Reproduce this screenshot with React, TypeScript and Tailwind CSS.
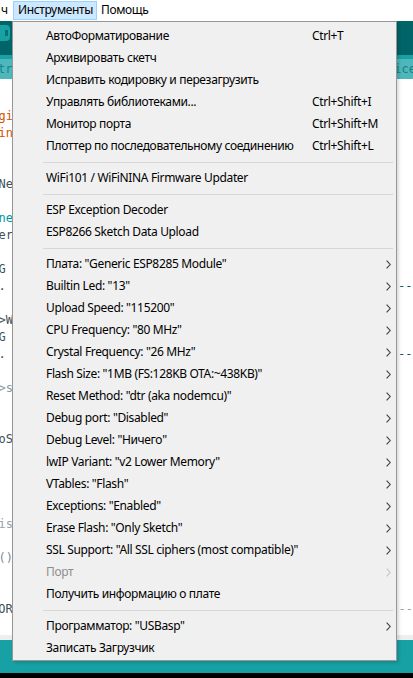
import { Fragment } from "react";

type MenuItem =
    | { label: string; shortcut?: string; sub?: boolean; disabled?: boolean }
    | "sep";

const menu: MenuItem[] = [
    { label: "АвтоФорматирование", shortcut: "Ctrl+T" },
    { label: "Архивировать скетч" },
    { label: "Исправить кодировку и перезагрузить" },
    { label: "Управлять библиотеками...", shortcut: "Ctrl+Shift+I" },
    { label: "Монитор порта", shortcut: "Ctrl+Shift+M" },
    { label: "Плоттер по последовательному соединению", shortcut: "Ctrl+Shift+L" },
    "sep",
    { label: "WiFi101 / WiFiNINA Firmware Updater" },
    "sep",
    { label: "ESP Exception Decoder" },
    { label: "ESP8266 Sketch Data Upload" },
    "sep",
    { label: 'Плата: "Generic ESP8285 Module"', sub: true },
    { label: 'Builtin Led: "13"', sub: true },
    { label: 'Upload Speed: "115200"', sub: true },
    { label: 'CPU Frequency: "80 MHz"', sub: true },
    { label: 'Crystal Frequency: "26 MHz"', sub: true },
    { label: 'Flash Size: "1MB (FS:128KB OTA:~438KB)"', sub: true },
    { label: 'Reset Method: "dtr (aka nodemcu)"', sub: true },
    { label: 'Debug port: "Disabled"', sub: true },
    { label: 'Debug Level: "Ничего"', sub: true },
    { label: 'lwIP Variant: "v2 Lower Memory"', sub: true },
    { label: 'VTables: "Flash"', sub: true },
    { label: 'Exceptions: "Enabled"', sub: true },
    { label: 'Erase Flash: "Only Sketch"', sub: true },
    { label: 'SSL Support: "All SSL ciphers (most compatible)"', sub: true },
    { label: "Порт", sub: true, disabled: true },
    { label: "Получить информацию о плате" },
    "sep",
    { label: 'Программатор: "USBasp"', sub: true },
    { label: "Записать Загрузчик" },
];

// editor lines peeking out on both sides of the menu
const code: Record<number, { l?: [string, string]; r?: [string, string] }> = {
    1: { l: ["gi", "text-[#d35400]"] },
    2: { l: ["in", "text-[#d35400]"] },
    5: { l: ["Ne", "text-[#434f54]"] },
    7: { l: ["ne", "text-[#00979c]"] },
    8: { l: ["er", "text-[#434f54]"] },
    10: { l: ["G ", "text-[#434f54]"] },
    11: { l: ["I. ", "text-[#434f54]"], r: ["--", "text-[#005c5f]"] },
    13: { l: [">W", "text-[#434f54]"] },
    14: { l: ["G ", "text-[#434f54]"] },
    15: { l: ["I. ", "text-[#434f54]"], r: ["--", "text-[#005c5f]"] },
    17: { l: [">s", "text-[#8a9aa0]"] },
    20: { l: ["oS", "text-[#434f54]"] },
    25: { l: ["is", "text-[#95a5a6]"] },
    27: { l: ["()", "text-[#7f8c9d]"] },
    30: { l: ["OR", "text-[#434f54]"], r: ["---", "text-[#95a5a6]"] },
};

function Chevron({ disabled }: { disabled?: boolean }) {
    return (
        <svg width="5" height="9" viewBox="0 0 5 9" fill="none">
            <path d="M0.6 0.6 L4.2 4.5 L0.6 8.4" stroke={disabled ? "#c4c4c4" : "#3c3c3c"} strokeWidth="1.1" />
        </svg>
    );
}

function ToolsMenu() {
    return (
        <div className="absolute left-[12px] top-[21px] w-[385px] border border-[#979797] bg-[#f0f0f0] pt-[3px] pb-[1px] tracking-[-0.35px] shadow-[2px_2px_3px_rgba(0,0,0,0.15)]">
            {menu.map((it, i) =>
                it === "sep" ? (
                    <div key={i} className="h-[10px] flex items-center">
                        <div className="ml-[30px] mr-[3px] flex-1 border-t border-[#d7d7d7]" />
                    </div>
                ) : (
                    <div key={i} className={`h-[22px] flex items-center pl-[33px] whitespace-nowrap ${it.disabled ? "text-[#8d8d8d]" : "text-black"}`}>
                        <span className="w-[266px]">{it.label}</span>
                        <span className="flex-1">{it.shortcut}</span>
                        <span className="w-[5px] mr-[5px] flex items-center">
                            {it.sub && <Chevron disabled={it.disabled} />}
                        </span>
                    </div>
                )
            )}
        </div>
    );
}

export default function App() {
    const lines = Array.from({ length: 32 }, (_, i) => i);
    return (
        <div className="relative w-[413px] h-[678px] overflow-hidden bg-white font-['Noto_Sans',sans-serif] text-[12px]">
            <div className="flex flex-col h-full">
                {/* menu bar */}
                <div className="h-[21px] flex items-center bg-white text-black tracking-[-0.35px]">
                    <span className="w-[13px] pl-[1px]">ч</span>
                    <span className="w-[84px] h-[19px] flex items-center pl-[4px] bg-[#cce8ff] border border-[#99d1ff]">Инструменты</span>
                    <span className="ml-[4px]">Помощь</span>
                </div>

                {/* toolbar */}
                <div className="h-[34px] bg-[#006468] flex items-start pt-[4px]">
                    <div className="w-[10px] h-[16px] bg-[#17a1a5] rounded-r-sm flex items-center justify-end pr-[2px]">
                        <div className="w-[3px] h-[6px] bg-[#0b6f73]" />
                    </div>
                </div>
                <div className="h-[4px] bg-[#17a1a5]" />

                {/* tabs */}
                <div className="h-[21px] bg-[#4db7bb] flex items-center justify-between font-['DejaVu_Sans_Mono',monospace] text-[12px]">
                    <span className="text-[#15868a] -ml-[2px]">tra</span>
                    <span className="text-[#1d7c80] mr-[-3px]">ice</span>
                </div>

                {/* editor */}
                <div className="flex-1 bg-white pt-[12px] font-['DejaVu_Sans_Mono',monospace] text-[12px] leading-[17px]">
                    {lines.map((n) => {
                        const c = code[n];
                        return (
                            <div key={n} className="h-[17px] flex whitespace-pre">
                                <div className="w-[13px] overflow-hidden flex justify-end">
                                    {c?.l && <span className={c.l[1]}>{c.l[0]}</span>}
                                </div>
                                <div className="w-[385px]" />
                                {c?.r && <span className={c.r[1]}>{c.r[0]}</span>}
                            </div>
                        );
                    })}
                </div>

                <div className="h-[5px] bg-[#eeeeee]" />
                <div className="h-[33px] bg-[#17a1a5]" />
                <div className="h-[5px] bg-black" />
            </div>

            <ToolsMenu />
        </div>
    );
}
